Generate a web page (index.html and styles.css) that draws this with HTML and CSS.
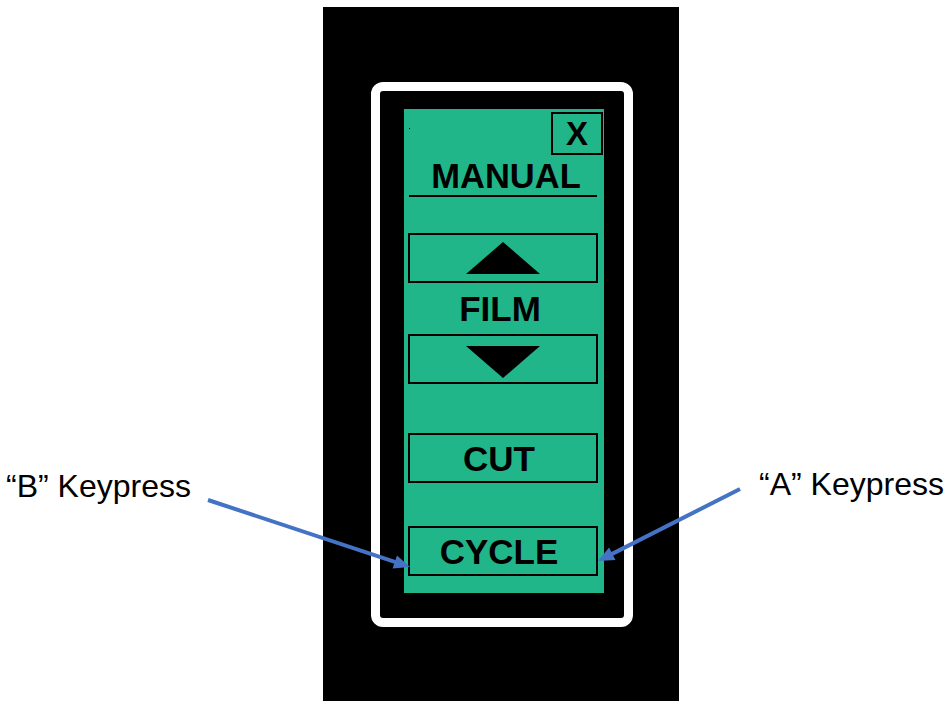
FILE: index.html
```html
<!DOCTYPE html>
<html>
<head>
<meta charset="utf-8">
<link rel="stylesheet" href="styles.css">
</head>
<body>
<div class="page">
  <div class="side side-left"><span class="note">“B” Keypress</span></div>
  <div class="device">
    <div class="frame">
      <div class="panel">
        <div class="topbar">
          <span class="dot"></span>
          <div class="close">X</div>
        </div>
        <div class="title">MANUAL</div>
        <div class="btn btn-up">
          <svg width="74" height="32" viewBox="0 0 74 32"><polygon points="37,0 74,32 0,32" fill="#000"/></svg>
        </div>
        <div class="film">FILM</div>
        <div class="btn btn-down">
          <svg width="74" height="32" viewBox="0 0 74 32"><polygon points="0,0 74,0 37,32" fill="#000"/></svg>
        </div>
        <div class="btn btn-text btn-cut">CUT</div>
        <div class="btn btn-text btn-cycle">CYCLE</div>
      </div>
    </div>
  </div>
  <div class="side side-right"><span class="note">“A” Keypress</span></div>
  <svg class="arrows" width="949" height="704" viewBox="0 0 949 704">
    <line x1="208" y1="500" x2="398.6" y2="563.2" stroke="#4472C4" stroke-width="4"/>
    <polygon points="410,567 392.6,568.6 397,555.4" fill="#4472C4"/>
    <line x1="740" y1="489" x2="608.7" y2="555.6" stroke="#4472C4" stroke-width="4"/>
    <polygon points="598,561 609.1,547.6 615.5,560" fill="#4472C4"/>
  </svg>
</div>
</body>
</html>
```
FILE: styles.css
```css
html, body {
  margin: 0;
  padding: 0;
  background: #fff;
}

.page {
  position: relative;
  display: flex;
  width: 949px;
  height: 704px;
  overflow: hidden;
  font-family: "Liberation Sans", Arial, sans-serif;
  color: #000;
}

.side {
  box-sizing: border-box;
}

.side-left {
  width: 323px;
  padding: 470px 0 0 6px;
}

.side-right {
  flex: 1;
  padding: 468px 0 0 80px;
}

.note {
  font-size: 32px;
  line-height: 32px;
  white-space: nowrap;
}

.device {
  width: 356px;
  height: 694px;
  margin-top: 7px;
  background: #000;
  box-sizing: border-box;
  padding: 75px 0 0 48px;
}

.frame {
  width: 262px;
  height: 545px;
  box-sizing: border-box;
  border: 9px solid #fff;
  border-radius: 12px;
  padding: 18px 0 0 24px;
}

.panel {
  width: 200px;
  height: 484px;
  background: #20b689;
  display: flex;
  flex-direction: column;
  box-sizing: border-box;
  padding-top: 3px;
}

.topbar {
  display: flex;
  justify-content: space-between;
  align-items: flex-start;
  height: 43px;
  padding-right: 1px;
}

.dot {
  width: 1px;
  height: 1px;
  background: #000;
  margin: 16px 0 0 5px;
}

.close {
  width: 52px;
  height: 43px;
  box-sizing: border-box;
  border: 2px solid #000;
  display: flex;
  align-items: center;
  justify-content: center;
  font-weight: bold;
  font-size: 33px;
  line-height: 33px;
}

.title {
  margin: 4px 7px 0 5px;
  padding: 0 0 2px 6px;
  border-bottom: 2px solid #000;
  text-align: center;
  font-weight: bold;
  font-size: 34.5px;
  line-height: 34px;
}

.btn {
  margin-left: 4px;
  width: 190px;
  height: 50px;
  box-sizing: border-box;
  border: 2px solid #000;
  display: flex;
  align-items: center;
  justify-content: center;
}

.btn-text {
  padding-right: 8px;
  font-weight: bold;
  font-size: 35px;
  line-height: 35px;
}

.btn-up {
  margin-top: 36px;
}

.btn-down svg {
  margin-top: 6px;
}

.film {
  height: 51px;
  display: flex;
  align-items: center;
  justify-content: center;
  padding-right: 8px;
  font-weight: bold;
  font-size: 35px;
  line-height: 35px;
}

.btn-cut {
  margin-top: 49px;
}

.btn-cycle {
  margin-top: 43px;
}

.arrows {
  position: absolute;
  left: 0;
  top: 0;
  pointer-events: none;
}
```
